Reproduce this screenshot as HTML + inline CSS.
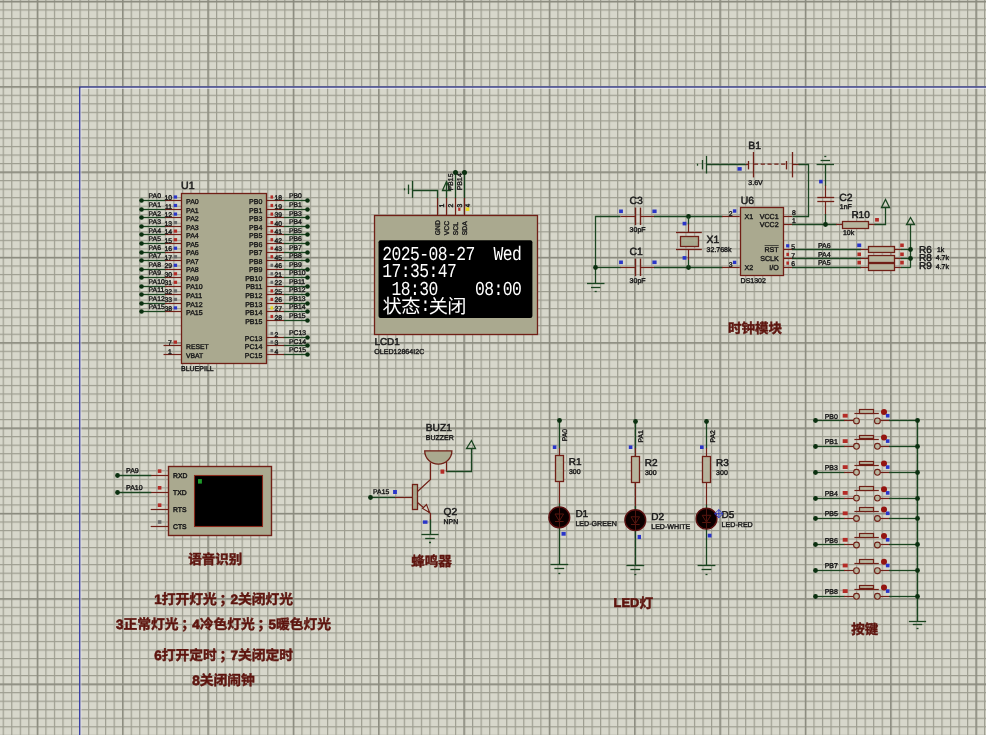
<!DOCTYPE html>
<html><head><meta charset="utf-8"><title>Schematic</title>
<style>
html,body{margin:0;padding:0;background:#d7d7cb;}
body{width:986px;height:735px;overflow:hidden;font-family:"Liberation Sans",sans-serif;}
svg{display:block;will-change:transform;text-rendering:geometricPrecision;font-family:"Liberation Sans",sans-serif;}
.oled{font-family:"Liberation Mono",monospace;font-size:16.38px;letter-spacing:-0.56px;fill:#fff;}
.oledcjk{font-family:"Liberation Sans","Noto Sans CJK SC",sans-serif;font-size:19.2px;fill:#fff;}
.lbl{font-family:"Liberation Sans","Noto Sans CJK SC",sans-serif;font-weight:bold;fill:#5e150f;stroke:#5e150f;stroke-width:0.45;}
</style></head><body>
<svg width="986" height="735" viewBox="0 0 986 735" fill="none">
<defs>
<pattern id="gm" x="2.664" y="0.860" width="8.534" height="8.534" patternUnits="userSpaceOnUse"><path d="M0.5 0V8.534M0 0.5H8.534" stroke="#9d9d90" stroke-width="1.4" fill="none"/></pattern>
<pattern id="gM" x="36.800" y="86.200" width="85.34" height="85.34" patternUnits="userSpaceOnUse"><path d="M0.5 0V85.34M0 0.5H85.34" stroke="#8a8a7e" stroke-width="1.8" fill="none"/></pattern>
</defs>
<rect width="986" height="735" fill="#d7d7cb"/>
<rect width="986" height="735" fill="url(#gm)"/>
<rect width="986" height="735" fill="url(#gM)"/>
<path d="M80.9 735V88.3H986" stroke="#f0f0ff" stroke-opacity="0.75" stroke-width="1"/>
<path d="M79.7 735V87.0H986" stroke="#2830a4" stroke-width="1.15"/>
<path d="M141.4 200.5L165.5 200.5" stroke="#1a4520" stroke-width="1.3"/>
<path d="M165.0 200.5L181.6 200.5" stroke="#701f16" stroke-width="1.2"/>
<circle cx="141.5" cy="200.5" r="2.3" fill="#0b3010"/>
<text x="148.6" y="198.4" font-size="6.8" fill="#1c1c1c" stroke="#1c1c1c" stroke-width="0.4">PA0</text>
<text x="172.0" y="200.0" font-size="6.8" text-anchor="end" fill="#1c1c1c" stroke="#1c1c1c" stroke-width="0.4">10</text>
<rect x="173.7" y="195.4" width="3.4" height="3.2" fill="#2a35c8"/>
<path d="M141.4 209.5L165.5 209.5" stroke="#1a4520" stroke-width="1.3"/>
<path d="M165.0 209.5L181.6 209.5" stroke="#701f16" stroke-width="1.2"/>
<circle cx="141.5" cy="209.5" r="2.3" fill="#0b3010"/>
<text x="148.6" y="206.9" font-size="6.8" fill="#1c1c1c" stroke="#1c1c1c" stroke-width="0.4">PA1</text>
<text x="172.0" y="208.5" font-size="6.8" text-anchor="end" fill="#1c1c1c" stroke="#1c1c1c" stroke-width="0.4">11</text>
<rect x="173.7" y="203.9" width="3.4" height="3.2" fill="#2a35c8"/>
<path d="M141.4 217.5L165.5 217.5" stroke="#1a4520" stroke-width="1.3"/>
<path d="M165.0 217.5L181.6 217.5" stroke="#701f16" stroke-width="1.2"/>
<circle cx="141.5" cy="217.5" r="2.3" fill="#0b3010"/>
<text x="148.6" y="215.5" font-size="6.8" fill="#1c1c1c" stroke="#1c1c1c" stroke-width="0.4">PA2</text>
<text x="172.0" y="217.1" font-size="6.8" text-anchor="end" fill="#1c1c1c" stroke="#1c1c1c" stroke-width="0.4">12</text>
<rect x="173.7" y="212.5" width="3.4" height="3.2" fill="#2a35c8"/>
<path d="M141.4 226.5L165.5 226.5" stroke="#1a4520" stroke-width="1.3"/>
<path d="M165.0 226.5L181.6 226.5" stroke="#701f16" stroke-width="1.2"/>
<circle cx="141.5" cy="226.5" r="2.3" fill="#0b3010"/>
<text x="148.6" y="224.0" font-size="6.8" fill="#1c1c1c" stroke="#1c1c1c" stroke-width="0.4">PA3</text>
<text x="172.0" y="225.6" font-size="6.8" text-anchor="end" fill="#1c1c1c" stroke="#1c1c1c" stroke-width="0.4">13</text>
<rect x="173.7" y="221.0" width="3.4" height="3.2" fill="#6a6a6a"/>
<path d="M141.4 234.5L165.5 234.5" stroke="#1a4520" stroke-width="1.3"/>
<path d="M165.0 234.5L181.6 234.5" stroke="#701f16" stroke-width="1.2"/>
<circle cx="141.5" cy="234.5" r="2.3" fill="#0b3010"/>
<text x="148.6" y="232.5" font-size="6.8" fill="#1c1c1c" stroke="#1c1c1c" stroke-width="0.4">PA4</text>
<text x="172.0" y="234.1" font-size="6.8" text-anchor="end" fill="#1c1c1c" stroke="#1c1c1c" stroke-width="0.4">14</text>
<rect x="173.7" y="229.5" width="3.4" height="3.2" fill="#b42c27"/>
<path d="M141.4 243.5L165.5 243.5" stroke="#1a4520" stroke-width="1.3"/>
<path d="M165.0 243.5L181.6 243.5" stroke="#701f16" stroke-width="1.2"/>
<circle cx="141.5" cy="243.5" r="2.3" fill="#0b3010"/>
<text x="148.6" y="241.1" font-size="6.8" fill="#1c1c1c" stroke="#1c1c1c" stroke-width="0.4">PA5</text>
<text x="172.0" y="242.7" font-size="6.8" text-anchor="end" fill="#1c1c1c" stroke="#1c1c1c" stroke-width="0.4">15</text>
<rect x="173.7" y="238.1" width="3.4" height="3.2" fill="#b42c27"/>
<path d="M141.4 252.5L165.5 252.5" stroke="#1a4520" stroke-width="1.3"/>
<path d="M165.0 252.5L181.6 252.5" stroke="#701f16" stroke-width="1.2"/>
<circle cx="141.5" cy="252.5" r="2.3" fill="#0b3010"/>
<text x="148.6" y="249.6" font-size="6.8" fill="#1c1c1c" stroke="#1c1c1c" stroke-width="0.4">PA6</text>
<text x="172.0" y="251.2" font-size="6.8" text-anchor="end" fill="#1c1c1c" stroke="#1c1c1c" stroke-width="0.4">16</text>
<rect x="173.7" y="246.6" width="3.4" height="3.2" fill="#2a35c8"/>
<path d="M141.4 260.5L165.5 260.5" stroke="#1a4520" stroke-width="1.3"/>
<path d="M165.0 260.5L181.6 260.5" stroke="#701f16" stroke-width="1.2"/>
<circle cx="141.5" cy="260.5" r="2.3" fill="#0b3010"/>
<text x="148.6" y="258.1" font-size="6.8" fill="#1c1c1c" stroke="#1c1c1c" stroke-width="0.4">PA7</text>
<text x="172.0" y="259.7" font-size="6.8" text-anchor="end" fill="#1c1c1c" stroke="#1c1c1c" stroke-width="0.4">17</text>
<rect x="173.7" y="255.1" width="3.4" height="3.2" fill="#6a6a6a"/>
<path d="M141.4 269.5L165.5 269.5" stroke="#1a4520" stroke-width="1.3"/>
<path d="M165.0 269.5L181.6 269.5" stroke="#701f16" stroke-width="1.2"/>
<circle cx="141.5" cy="269.5" r="2.3" fill="#0b3010"/>
<text x="148.6" y="266.7" font-size="6.8" fill="#1c1c1c" stroke="#1c1c1c" stroke-width="0.4">PA8</text>
<text x="172.0" y="268.3" font-size="6.8" text-anchor="end" fill="#1c1c1c" stroke="#1c1c1c" stroke-width="0.4">29</text>
<rect x="173.7" y="263.7" width="3.4" height="3.2" fill="#2a35c8"/>
<path d="M141.4 277.5L165.5 277.5" stroke="#1a4520" stroke-width="1.3"/>
<path d="M165.0 277.5L181.6 277.5" stroke="#701f16" stroke-width="1.2"/>
<circle cx="141.5" cy="277.5" r="2.3" fill="#0b3010"/>
<text x="148.6" y="275.2" font-size="6.8" fill="#1c1c1c" stroke="#1c1c1c" stroke-width="0.4">PA9</text>
<text x="172.0" y="276.8" font-size="6.8" text-anchor="end" fill="#1c1c1c" stroke="#1c1c1c" stroke-width="0.4">30</text>
<rect x="173.7" y="272.2" width="3.4" height="3.2" fill="#b42c27"/>
<path d="M141.4 286.5L165.5 286.5" stroke="#1a4520" stroke-width="1.3"/>
<path d="M165.0 286.5L181.6 286.5" stroke="#701f16" stroke-width="1.2"/>
<circle cx="141.5" cy="286.5" r="2.3" fill="#0b3010"/>
<text x="148.6" y="283.7" font-size="6.8" fill="#1c1c1c" stroke="#1c1c1c" stroke-width="0.4">PA10</text>
<text x="172.0" y="285.3" font-size="6.8" text-anchor="end" fill="#1c1c1c" stroke="#1c1c1c" stroke-width="0.4">31</text>
<rect x="173.7" y="280.7" width="3.4" height="3.2" fill="#b42c27"/>
<path d="M141.4 294.5L165.5 294.5" stroke="#1a4520" stroke-width="1.3"/>
<path d="M165.0 294.5L181.6 294.5" stroke="#701f16" stroke-width="1.2"/>
<circle cx="141.5" cy="294.5" r="2.3" fill="#0b3010"/>
<text x="148.6" y="292.3" font-size="6.8" fill="#1c1c1c" stroke="#1c1c1c" stroke-width="0.4">PA11</text>
<text x="172.0" y="293.9" font-size="6.8" text-anchor="end" fill="#1c1c1c" stroke="#1c1c1c" stroke-width="0.4">32</text>
<rect x="173.7" y="289.3" width="3.4" height="3.2" fill="#6a6a6a"/>
<path d="M141.4 303.5L165.5 303.5" stroke="#1a4520" stroke-width="1.3"/>
<path d="M165.0 303.5L181.6 303.5" stroke="#701f16" stroke-width="1.2"/>
<circle cx="141.5" cy="303.5" r="2.3" fill="#0b3010"/>
<text x="148.6" y="300.8" font-size="6.8" fill="#1c1c1c" stroke="#1c1c1c" stroke-width="0.4">PA12</text>
<text x="172.0" y="302.4" font-size="6.8" text-anchor="end" fill="#1c1c1c" stroke="#1c1c1c" stroke-width="0.4">33</text>
<rect x="173.7" y="297.8" width="3.4" height="3.2" fill="#6a6a6a"/>
<path d="M141.4 311.5L165.5 311.5" stroke="#1a4520" stroke-width="1.3"/>
<path d="M165.0 311.5L181.6 311.5" stroke="#701f16" stroke-width="1.2"/>
<circle cx="141.5" cy="311.5" r="2.3" fill="#0b3010"/>
<text x="148.6" y="309.3" font-size="6.8" fill="#1c1c1c" stroke="#1c1c1c" stroke-width="0.4">PA15</text>
<text x="172.0" y="310.9" font-size="6.8" text-anchor="end" fill="#1c1c1c" stroke="#1c1c1c" stroke-width="0.4">38</text>
<rect x="173.7" y="306.3" width="3.4" height="3.2" fill="#2a35c8"/>
<path d="M283.5 200.5L307.5 200.5" stroke="#1a4520" stroke-width="1.3"/>
<path d="M266.6 200.5L284.0 200.5" stroke="#701f16" stroke-width="1.2"/>
<circle cx="307.5" cy="200.5" r="2.3" fill="#0b3010"/>
<text x="289.0" y="198.4" font-size="6.8" fill="#1c1c1c" stroke="#1c1c1c" stroke-width="0.4">PB0</text>
<text x="274.6" y="200.0" font-size="6.8" fill="#1c1c1c" stroke="#1c1c1c" stroke-width="0.4">18</text>
<rect x="270.5" y="195.4" width="2.6" height="3.2" fill="#b42c27"/>
<path d="M283.5 209.5L307.5 209.5" stroke="#1a4520" stroke-width="1.3"/>
<path d="M266.6 209.5L284.0 209.5" stroke="#701f16" stroke-width="1.2"/>
<circle cx="307.5" cy="209.5" r="2.3" fill="#0b3010"/>
<text x="289.0" y="206.9" font-size="6.8" fill="#1c1c1c" stroke="#1c1c1c" stroke-width="0.4">PB1</text>
<text x="274.6" y="208.5" font-size="6.8" fill="#1c1c1c" stroke="#1c1c1c" stroke-width="0.4">19</text>
<rect x="270.5" y="203.9" width="2.6" height="3.2" fill="#b42c27"/>
<path d="M283.5 217.5L307.5 217.5" stroke="#1a4520" stroke-width="1.3"/>
<path d="M266.6 217.5L284.0 217.5" stroke="#701f16" stroke-width="1.2"/>
<circle cx="307.5" cy="217.5" r="2.3" fill="#0b3010"/>
<text x="289.0" y="215.5" font-size="6.8" fill="#1c1c1c" stroke="#1c1c1c" stroke-width="0.4">PB3</text>
<text x="274.6" y="217.1" font-size="6.8" fill="#1c1c1c" stroke="#1c1c1c" stroke-width="0.4">39</text>
<rect x="270.5" y="212.5" width="2.6" height="3.2" fill="#b42c27"/>
<path d="M283.5 226.5L307.5 226.5" stroke="#1a4520" stroke-width="1.3"/>
<path d="M266.6 226.5L284.0 226.5" stroke="#701f16" stroke-width="1.2"/>
<circle cx="307.5" cy="226.5" r="2.3" fill="#0b3010"/>
<text x="289.0" y="224.0" font-size="6.8" fill="#1c1c1c" stroke="#1c1c1c" stroke-width="0.4">PB4</text>
<text x="274.6" y="225.6" font-size="6.8" fill="#1c1c1c" stroke="#1c1c1c" stroke-width="0.4">40</text>
<rect x="270.5" y="221.0" width="2.6" height="3.2" fill="#b42c27"/>
<path d="M283.5 234.5L307.5 234.5" stroke="#1a4520" stroke-width="1.3"/>
<path d="M266.6 234.5L284.0 234.5" stroke="#701f16" stroke-width="1.2"/>
<circle cx="307.5" cy="234.5" r="2.3" fill="#0b3010"/>
<text x="289.0" y="232.5" font-size="6.8" fill="#1c1c1c" stroke="#1c1c1c" stroke-width="0.4">PB5</text>
<text x="274.6" y="234.1" font-size="6.8" fill="#1c1c1c" stroke="#1c1c1c" stroke-width="0.4">41</text>
<rect x="270.5" y="229.5" width="2.6" height="3.2" fill="#b42c27"/>
<path d="M283.5 243.5L307.5 243.5" stroke="#1a4520" stroke-width="1.3"/>
<path d="M266.6 243.5L284.0 243.5" stroke="#701f16" stroke-width="1.2"/>
<circle cx="307.5" cy="243.5" r="2.3" fill="#0b3010"/>
<text x="289.0" y="241.1" font-size="6.8" fill="#1c1c1c" stroke="#1c1c1c" stroke-width="0.4">PB6</text>
<text x="274.6" y="242.7" font-size="6.8" fill="#1c1c1c" stroke="#1c1c1c" stroke-width="0.4">42</text>
<rect x="270.5" y="238.1" width="2.6" height="3.2" fill="#b42c27"/>
<path d="M283.5 252.5L307.5 252.5" stroke="#1a4520" stroke-width="1.3"/>
<path d="M266.6 252.5L284.0 252.5" stroke="#701f16" stroke-width="1.2"/>
<circle cx="307.5" cy="252.5" r="2.3" fill="#0b3010"/>
<text x="289.0" y="249.6" font-size="6.8" fill="#1c1c1c" stroke="#1c1c1c" stroke-width="0.4">PB7</text>
<text x="274.6" y="251.2" font-size="6.8" fill="#1c1c1c" stroke="#1c1c1c" stroke-width="0.4">43</text>
<rect x="270.5" y="246.6" width="2.6" height="3.2" fill="#b42c27"/>
<path d="M283.5 260.5L307.5 260.5" stroke="#1a4520" stroke-width="1.3"/>
<path d="M266.6 260.5L284.0 260.5" stroke="#701f16" stroke-width="1.2"/>
<circle cx="307.5" cy="260.5" r="2.3" fill="#0b3010"/>
<text x="289.0" y="258.1" font-size="6.8" fill="#1c1c1c" stroke="#1c1c1c" stroke-width="0.4">PB8</text>
<text x="274.6" y="259.7" font-size="6.8" fill="#1c1c1c" stroke="#1c1c1c" stroke-width="0.4">45</text>
<rect x="270.5" y="255.1" width="2.6" height="3.2" fill="#b42c27"/>
<path d="M283.5 269.5L307.5 269.5" stroke="#1a4520" stroke-width="1.3"/>
<path d="M266.6 269.5L284.0 269.5" stroke="#701f16" stroke-width="1.2"/>
<circle cx="307.5" cy="269.5" r="2.3" fill="#0b3010"/>
<text x="289.0" y="266.7" font-size="6.8" fill="#1c1c1c" stroke="#1c1c1c" stroke-width="0.4">PB9</text>
<text x="274.6" y="268.3" font-size="6.8" fill="#1c1c1c" stroke="#1c1c1c" stroke-width="0.4">46</text>
<rect x="270.5" y="263.7" width="2.6" height="3.2" fill="#6a6a6a"/>
<path d="M283.5 277.5L307.5 277.5" stroke="#1a4520" stroke-width="1.3"/>
<path d="M266.6 277.5L284.0 277.5" stroke="#701f16" stroke-width="1.2"/>
<circle cx="307.5" cy="277.5" r="2.3" fill="#0b3010"/>
<text x="289.0" y="275.2" font-size="6.8" fill="#1c1c1c" stroke="#1c1c1c" stroke-width="0.4">PB10</text>
<text x="274.6" y="276.8" font-size="6.8" fill="#1c1c1c" stroke="#1c1c1c" stroke-width="0.4">21</text>
<rect x="270.5" y="272.2" width="2.6" height="3.2" fill="#6a6a6a"/>
<path d="M283.5 286.5L307.5 286.5" stroke="#1a4520" stroke-width="1.3"/>
<path d="M266.6 286.5L284.0 286.5" stroke="#701f16" stroke-width="1.2"/>
<circle cx="307.5" cy="286.5" r="2.3" fill="#0b3010"/>
<text x="289.0" y="283.7" font-size="6.8" fill="#1c1c1c" stroke="#1c1c1c" stroke-width="0.4">PB11</text>
<text x="274.6" y="285.3" font-size="6.8" fill="#1c1c1c" stroke="#1c1c1c" stroke-width="0.4">22</text>
<rect x="270.5" y="280.7" width="2.6" height="3.2" fill="#6a6a6a"/>
<path d="M283.5 294.5L307.5 294.5" stroke="#1a4520" stroke-width="1.3"/>
<path d="M266.6 294.5L284.0 294.5" stroke="#701f16" stroke-width="1.2"/>
<circle cx="307.5" cy="294.5" r="2.3" fill="#0b3010"/>
<text x="289.0" y="292.3" font-size="6.8" fill="#1c1c1c" stroke="#1c1c1c" stroke-width="0.4">PB12</text>
<text x="274.6" y="293.9" font-size="6.8" fill="#1c1c1c" stroke="#1c1c1c" stroke-width="0.4">25</text>
<rect x="270.5" y="289.3" width="2.6" height="3.2" fill="#b42c27"/>
<path d="M283.5 303.5L307.5 303.5" stroke="#1a4520" stroke-width="1.3"/>
<path d="M266.6 303.5L284.0 303.5" stroke="#701f16" stroke-width="1.2"/>
<circle cx="307.5" cy="303.5" r="2.3" fill="#0b3010"/>
<text x="289.0" y="300.8" font-size="6.8" fill="#1c1c1c" stroke="#1c1c1c" stroke-width="0.4">PB13</text>
<text x="274.6" y="302.4" font-size="6.8" fill="#1c1c1c" stroke="#1c1c1c" stroke-width="0.4">26</text>
<rect x="270.5" y="297.8" width="2.6" height="3.2" fill="#b42c27"/>
<path d="M283.5 311.5L307.5 311.5" stroke="#1a4520" stroke-width="1.3"/>
<path d="M266.6 311.5L284.0 311.5" stroke="#701f16" stroke-width="1.2"/>
<circle cx="307.5" cy="311.5" r="2.3" fill="#0b3010"/>
<text x="289.0" y="309.3" font-size="6.8" fill="#1c1c1c" stroke="#1c1c1c" stroke-width="0.4">PB14</text>
<text x="274.6" y="310.9" font-size="6.8" fill="#1c1c1c" stroke="#1c1c1c" stroke-width="0.4">27</text>
<rect x="270.5" y="306.3" width="2.6" height="3.2" fill="#e8d820"/>
<path d="M283.5 320.5L307.5 320.5" stroke="#1a4520" stroke-width="1.3"/>
<path d="M266.6 320.5L284.0 320.5" stroke="#701f16" stroke-width="1.2"/>
<circle cx="307.5" cy="320.5" r="2.3" fill="#0b3010"/>
<text x="289.0" y="317.9" font-size="6.8" fill="#1c1c1c" stroke="#1c1c1c" stroke-width="0.4">PB15</text>
<text x="274.6" y="319.5" font-size="6.8" fill="#1c1c1c" stroke="#1c1c1c" stroke-width="0.4">28</text>
<rect x="270.5" y="314.9" width="2.6" height="3.2" fill="#b42c27"/>
<path d="M283.5 337.5L307.5 337.5" stroke="#1a4520" stroke-width="1.3"/>
<path d="M266.6 337.5L284.0 337.5" stroke="#701f16" stroke-width="1.2"/>
<circle cx="307.5" cy="337.5" r="2.3" fill="#0b3010"/>
<text x="289.0" y="334.9" font-size="6.8" fill="#1c1c1c" stroke="#1c1c1c" stroke-width="0.4">PC13</text>
<text x="274.6" y="336.5" font-size="6.8" fill="#1c1c1c" stroke="#1c1c1c" stroke-width="0.4">2</text>
<rect x="270.5" y="331.9" width="2.6" height="3.2" fill="#6a6a6a"/>
<path d="M283.5 345.5L307.5 345.5" stroke="#1a4520" stroke-width="1.3"/>
<path d="M266.6 345.5L284.0 345.5" stroke="#701f16" stroke-width="1.2"/>
<circle cx="307.5" cy="345.5" r="2.3" fill="#0b3010"/>
<text x="289.0" y="343.5" font-size="6.8" fill="#1c1c1c" stroke="#1c1c1c" stroke-width="0.4">PC14</text>
<text x="274.6" y="345.1" font-size="6.8" fill="#1c1c1c" stroke="#1c1c1c" stroke-width="0.4">3</text>
<rect x="270.5" y="340.5" width="2.6" height="3.2" fill="#6a6a6a"/>
<path d="M283.5 354.5L307.5 354.5" stroke="#1a4520" stroke-width="1.3"/>
<path d="M266.6 354.5L284.0 354.5" stroke="#701f16" stroke-width="1.2"/>
<circle cx="307.5" cy="354.5" r="2.3" fill="#0b3010"/>
<text x="289.0" y="352.0" font-size="6.8" fill="#1c1c1c" stroke="#1c1c1c" stroke-width="0.4">PC15</text>
<text x="274.6" y="353.6" font-size="6.8" fill="#1c1c1c" stroke="#1c1c1c" stroke-width="0.4">4</text>
<rect x="270.5" y="349.0" width="2.6" height="3.2" fill="#6a6a6a"/>
<path d="M163.5 345.5L181.6 345.5" stroke="#701f16" stroke-width="1.2"/>
<text x="171.8" y="345.1" font-size="6.8" text-anchor="end" fill="#1c1c1c" stroke="#1c1c1c" stroke-width="0.4">7</text>
<rect x="173.6" y="340.5" width="3.4" height="3.2" fill="#b42c27"/>
<path d="M163.5 354.5L181.6 354.5" stroke="#701f16" stroke-width="1.2"/>
<text x="171.8" y="353.6" font-size="6.8" text-anchor="end" fill="#1c1c1c" stroke="#1c1c1c" stroke-width="0.4">1</text>
<rect x="181.5" y="193.5" width="85.0" height="170.0" fill="#aaa98f" stroke="#701f16" stroke-width="1.3"/>
<text x="186.0" y="204.1" font-size="7.0" fill="#1c1c1c" stroke="#1c1c1c" stroke-width="0.4">PA0</text>
<text x="186.0" y="212.6" font-size="7.0" fill="#1c1c1c" stroke="#1c1c1c" stroke-width="0.4">PA1</text>
<text x="186.0" y="221.2" font-size="7.0" fill="#1c1c1c" stroke="#1c1c1c" stroke-width="0.4">PA2</text>
<text x="186.0" y="229.7" font-size="7.0" fill="#1c1c1c" stroke="#1c1c1c" stroke-width="0.4">PA3</text>
<text x="186.0" y="238.2" font-size="7.0" fill="#1c1c1c" stroke="#1c1c1c" stroke-width="0.4">PA4</text>
<text x="186.0" y="246.8" font-size="7.0" fill="#1c1c1c" stroke="#1c1c1c" stroke-width="0.4">PA5</text>
<text x="186.0" y="255.3" font-size="7.0" fill="#1c1c1c" stroke="#1c1c1c" stroke-width="0.4">PA6</text>
<text x="186.0" y="263.8" font-size="7.0" fill="#1c1c1c" stroke="#1c1c1c" stroke-width="0.4">PA7</text>
<text x="186.0" y="272.4" font-size="7.0" fill="#1c1c1c" stroke="#1c1c1c" stroke-width="0.4">PA8</text>
<text x="186.0" y="280.9" font-size="7.0" fill="#1c1c1c" stroke="#1c1c1c" stroke-width="0.4">PA9</text>
<text x="186.0" y="289.4" font-size="7.0" fill="#1c1c1c" stroke="#1c1c1c" stroke-width="0.4">PA10</text>
<text x="186.0" y="298.0" font-size="7.0" fill="#1c1c1c" stroke="#1c1c1c" stroke-width="0.4">PA11</text>
<text x="186.0" y="306.5" font-size="7.0" fill="#1c1c1c" stroke="#1c1c1c" stroke-width="0.4">PA12</text>
<text x="186.0" y="315.0" font-size="7.0" fill="#1c1c1c" stroke="#1c1c1c" stroke-width="0.4">PA15</text>
<text x="262.3" y="204.1" font-size="7.0" text-anchor="end" fill="#1c1c1c" stroke="#1c1c1c" stroke-width="0.4">PB0</text>
<text x="262.3" y="212.6" font-size="7.0" text-anchor="end" fill="#1c1c1c" stroke="#1c1c1c" stroke-width="0.4">PB1</text>
<text x="262.3" y="221.2" font-size="7.0" text-anchor="end" fill="#1c1c1c" stroke="#1c1c1c" stroke-width="0.4">PB3</text>
<text x="262.3" y="229.7" font-size="7.0" text-anchor="end" fill="#1c1c1c" stroke="#1c1c1c" stroke-width="0.4">PB4</text>
<text x="262.3" y="238.2" font-size="7.0" text-anchor="end" fill="#1c1c1c" stroke="#1c1c1c" stroke-width="0.4">PB5</text>
<text x="262.3" y="246.8" font-size="7.0" text-anchor="end" fill="#1c1c1c" stroke="#1c1c1c" stroke-width="0.4">PB6</text>
<text x="262.3" y="255.3" font-size="7.0" text-anchor="end" fill="#1c1c1c" stroke="#1c1c1c" stroke-width="0.4">PB7</text>
<text x="262.3" y="263.8" font-size="7.0" text-anchor="end" fill="#1c1c1c" stroke="#1c1c1c" stroke-width="0.4">PB8</text>
<text x="262.3" y="272.4" font-size="7.0" text-anchor="end" fill="#1c1c1c" stroke="#1c1c1c" stroke-width="0.4">PB9</text>
<text x="262.3" y="280.9" font-size="7.0" text-anchor="end" fill="#1c1c1c" stroke="#1c1c1c" stroke-width="0.4">PB10</text>
<text x="262.3" y="289.4" font-size="7.0" text-anchor="end" fill="#1c1c1c" stroke="#1c1c1c" stroke-width="0.4">PB11</text>
<text x="262.3" y="298.0" font-size="7.0" text-anchor="end" fill="#1c1c1c" stroke="#1c1c1c" stroke-width="0.4">PB12</text>
<text x="262.3" y="306.5" font-size="7.0" text-anchor="end" fill="#1c1c1c" stroke="#1c1c1c" stroke-width="0.4">PB13</text>
<text x="262.3" y="315.0" font-size="7.0" text-anchor="end" fill="#1c1c1c" stroke="#1c1c1c" stroke-width="0.4">PB14</text>
<text x="262.3" y="323.6" font-size="7.0" text-anchor="end" fill="#1c1c1c" stroke="#1c1c1c" stroke-width="0.4">PB15</text>
<text x="262.3" y="340.6" font-size="7.0" text-anchor="end" fill="#1c1c1c" stroke="#1c1c1c" stroke-width="0.4">PC13</text>
<text x="262.3" y="349.2" font-size="7.0" text-anchor="end" fill="#1c1c1c" stroke="#1c1c1c" stroke-width="0.4">PC14</text>
<text x="262.3" y="357.7" font-size="7.0" text-anchor="end" fill="#1c1c1c" stroke="#1c1c1c" stroke-width="0.4">PC15</text>
<text x="186.0" y="349.2" font-size="6.8" fill="#1c1c1c" stroke="#1c1c1c" stroke-width="0.4">RESET</text>
<text x="186.0" y="357.7" font-size="6.8" fill="#1c1c1c" stroke="#1c1c1c" stroke-width="0.4">VBAT</text>
<text x="181.0" y="189.2" font-size="10.6" fill="#1c1c1c" stroke="#1c1c1c" stroke-width="0.5">U1</text>
<text x="181.0" y="371.2" font-size="7" fill="#1c1c1c" stroke="#1c1c1c" stroke-width="0.4">BLUEPILL</text>
<path d="M437.5 198.5L437.5 190.5L412.5 190.5" stroke="#1a4520" stroke-width="1.3" fill="none"/>
<path d="M412.5 180.8L412.5 197.8" stroke="#1a4520" stroke-width="1.3"/>
<path d="M408.5 184.6L408.5 194.1" stroke="#1a4520" stroke-width="1.3"/>
<path d="M404.5 188.3L404.5 190.3" stroke="#1a4520" stroke-width="1.3"/>
<path d="M446.5 198.5L446.5 181.5" stroke="#1a4520" stroke-width="1.3"/>
<path d="M442.5 190.5L446.5 181.5L450.5 190.5Z" stroke="#1a4520" stroke-width="1.3" fill="none"/>
<path d="M455.5 198.5L455.5 172.1" stroke="#1a4520" stroke-width="1.3"/>
<circle cx="455.5" cy="172.5" r="2.5" fill="#0b3010"/>
<path d="M464.5 198.5L464.5 172.1" stroke="#1a4520" stroke-width="1.3"/>
<circle cx="464.5" cy="172.5" r="2.5" fill="#0b3010"/>
<path d="M437.5 198.0L437.5 215.4" stroke="#701f16" stroke-width="1.2"/>
<path d="M446.5 198.0L446.5 215.4" stroke="#701f16" stroke-width="1.2"/>
<path d="M455.5 198.0L455.5 215.4" stroke="#701f16" stroke-width="1.2"/>
<path d="M464.5 198.0L464.5 215.4" stroke="#701f16" stroke-width="1.2"/>
<text x="452.8" y="190.6" font-size="7.0" fill="#1c1c1c" transform="rotate(-90 452.8 190.6)" stroke="#1c1c1c" stroke-width="0.4">PB15</text>
<text x="461.8" y="190.3" font-size="7.0" fill="#1c1c1c" transform="rotate(-90 461.8 190.3)" stroke="#1c1c1c" stroke-width="0.4">PB14</text>
<text x="443.9" y="207.4" font-size="6.8" fill="#1c1c1c" transform="rotate(-90 443.9 207.4)" stroke="#1c1c1c" stroke-width="0.4">1</text>
<text x="452.8" y="207.4" font-size="6.8" fill="#1c1c1c" transform="rotate(-90 452.8 207.4)" stroke="#1c1c1c" stroke-width="0.4">2</text>
<text x="461.7" y="207.4" font-size="6.8" fill="#1c1c1c" transform="rotate(-90 461.7 207.4)" stroke="#1c1c1c" stroke-width="0.4">3</text>
<text x="470.5" y="207.4" font-size="6.8" fill="#1c1c1c" transform="rotate(-90 470.5 207.4)" stroke="#1c1c1c" stroke-width="0.4">4</text>
<rect x="458.2" y="207.7" width="2.2" height="3.2" fill="#b42c27"/>
<rect x="465.7" y="207.4" width="3.6" height="3.6" fill="#e8d820"/>
<rect x="374.5" y="215.5" width="163.0" height="119.0" fill="#aaa98f" stroke="#701f16" stroke-width="1.3"/>
<text x="440.5" y="235.3" font-size="6.8" fill="#1c1c1c" transform="rotate(-90 440.5 235.3)" stroke="#1c1c1c" stroke-width="0.4">GND</text>
<text x="449.4" y="235.3" font-size="6.8" fill="#1c1c1c" transform="rotate(-90 449.4 235.3)" stroke="#1c1c1c" stroke-width="0.4">VCC</text>
<text x="458.3" y="235.3" font-size="6.8" fill="#1c1c1c" transform="rotate(-90 458.3 235.3)" stroke="#1c1c1c" stroke-width="0.4">SCL</text>
<text x="467.1" y="235.3" font-size="6.8" fill="#1c1c1c" transform="rotate(-90 467.1 235.3)" stroke="#1c1c1c" stroke-width="0.4">SDA</text>
<rect x="378.5" y="240.2" width="153.9" height="77.8" fill="#000" rx="2"/>
<text class="oled" transform="translate(382.20 260.2) scale(1 1.209)">2025-08-27</text>
<text class="oled" transform="translate(493.44 260.2) scale(1 1.209)">Wed</text>
<text class="oled" transform="translate(382.20 277.2) scale(1 1.209)">17:35:47</text>
<text class="oled" transform="translate(391.47 294.9) scale(1 1.209)">18:30</text>
<text class="oled" transform="translate(474.90 294.9) scale(1 1.209)">08:00</text>
<text class="oledcjk" x="382.5" y="312.8" letter-spacing="-0.5">状态</text>
<text class="oled" transform="translate(420.60 311.2) scale(1 1.209)">:</text>
<text class="oledcjk" x="428.8" y="312.8" letter-spacing="-0.8">关闭</text>
<text x="374.4" y="344.6" font-size="9.9" fill="#1c1c1c" stroke="#1c1c1c" stroke-width="0.5">LCD1</text>
<text x="374.2" y="354.3" font-size="7.1" fill="#1c1c1c" stroke="#1c1c1c" stroke-width="0.4">OLED12864I2C</text>
<path d="M620.5 216.5L595.5 216.5L595.5 283.5" stroke="#1a4520" stroke-width="1.3" fill="none"/>
<path d="M595.7 267.5L621.0 267.5" stroke="#1a4520" stroke-width="1.3"/>
<circle cx="595.5" cy="267.5" r="2.4" fill="#0b3010"/>
<path d="M587.0 283.5L604.5 283.5" stroke="#1a4520" stroke-width="1.3"/>
<path d="M591.0 287.5L600.5 287.5" stroke="#1a4520" stroke-width="1.3"/>
<path d="M594.7 291.5L596.7 291.5" stroke="#1a4520" stroke-width="1.3"/>
<path d="M620.5 216.5L635.5 216.5" stroke="#701f16" stroke-width="1.2"/>
<path d="M640.6 216.5L654.5 216.5" stroke="#701f16" stroke-width="1.2"/>
<path d="M635.5 207.6L635.5 225.0" stroke="#701f16" stroke-width="1.4"/>
<path d="M640.5 207.6L640.5 225.0" stroke="#701f16" stroke-width="1.4"/>
<path d="M654.0 216.5L722.5 216.5" stroke="#1a4520" stroke-width="1.3"/>
<path d="M722.0 216.5L739.7 216.5" stroke="#701f16" stroke-width="1.2"/>
<rect x="619.1" y="209.5" width="3.8" height="3.6" fill="#2a35c8"/>
<rect x="652.4" y="209.5" width="4.2" height="3.6" fill="#2a35c8"/>
<text x="629.6" y="204.4" font-size="10.4" fill="#1c1c1c" stroke="#1c1c1c" stroke-width="0.5">C3</text>
<text x="629.6" y="231.6" font-size="7.0" fill="#1c1c1c" stroke="#1c1c1c" stroke-width="0.4">30pF</text>
<circle cx="688.5" cy="216.5" r="2.4" fill="#0b3010"/>
<path d="M620.5 267.5L635.5 267.5" stroke="#701f16" stroke-width="1.2"/>
<path d="M640.6 267.5L654.5 267.5" stroke="#701f16" stroke-width="1.2"/>
<path d="M635.5 258.6L635.5 276.0" stroke="#701f16" stroke-width="1.4"/>
<path d="M640.5 258.6L640.5 276.0" stroke="#701f16" stroke-width="1.4"/>
<path d="M654.0 267.5L722.5 267.5" stroke="#1a4520" stroke-width="1.3"/>
<path d="M722.0 267.5L739.7 267.5" stroke="#701f16" stroke-width="1.2"/>
<rect x="619.1" y="260.5" width="3.8" height="3.6" fill="#2a35c8"/>
<rect x="652.4" y="260.5" width="4.2" height="3.6" fill="#2a35c8"/>
<text x="629.6" y="255.4" font-size="10.4" fill="#1c1c1c" stroke="#1c1c1c" stroke-width="0.5">C1</text>
<text x="629.6" y="282.6" font-size="7.0" fill="#1c1c1c" stroke="#1c1c1c" stroke-width="0.4">30pF</text>
<circle cx="688.5" cy="267.5" r="2.4" fill="#0b3010"/>
<path d="M688.5 216.6L688.5 224.5" stroke="#1a4520" stroke-width="1.3"/>
<path d="M688.5 224.0L688.5 232.9" stroke="#701f16" stroke-width="1.2"/>
<path d="M688.5 259.5L688.5 267.6" stroke="#1a4520" stroke-width="1.3"/>
<path d="M688.5 249.8L688.5 260.0" stroke="#701f16" stroke-width="1.2"/>
<path d="M676.0 232.5L701.8 232.5" stroke="#701f16" stroke-width="1.3"/>
<path d="M676.0 249.5L701.8 249.5" stroke="#701f16" stroke-width="1.3"/>
<rect x="680.5" y="236.5" width="18.0" height="10.0" fill="#aaa98f" stroke="#701f16" stroke-width="1.3"/>
<rect x="682.6" y="221.8" width="3.8" height="3.6" fill="#2a35c8"/>
<rect x="682.6" y="256.1" width="3.8" height="3.6" fill="#2a35c8"/>
<text x="706.6" y="242.9" font-size="10.4" fill="#1c1c1c" stroke="#1c1c1c" stroke-width="0.5">X1</text>
<text x="706.6" y="251.5" font-size="7.0" fill="#1c1c1c" stroke="#1c1c1c" stroke-width="0.4">32.768k</text>
<rect x="732.9" y="209.3" width="3.4" height="3.4" fill="#2a35c8"/>
<rect x="732.9" y="260.7" width="3.4" height="3.4" fill="#2a35c8"/>
<text x="732.5" y="215.6" font-size="6.8" text-anchor="end" fill="#1c1c1c" stroke="#1c1c1c" stroke-width="0.4">2</text>
<text x="732.5" y="266.8" font-size="6.8" text-anchor="end" fill="#1c1c1c" stroke="#1c1c1c" stroke-width="0.4">3</text>
<path d="M783.5 216.5L792.5 216.5" stroke="#701f16" stroke-width="1.2"/>
<path d="M783.5 224.5L792.5 224.5" stroke="#701f16" stroke-width="1.2"/>
<path d="M783.5 249.5L792.5 249.5" stroke="#701f16" stroke-width="1.2"/>
<path d="M783.5 258.5L792.5 258.5" stroke="#701f16" stroke-width="1.2"/>
<path d="M783.5 267.5L792.5 267.5" stroke="#701f16" stroke-width="1.2"/>
<path d="M706.5 155.9L706.5 173.5" stroke="#1a4520" stroke-width="1.3"/>
<path d="M702.5 160.0L702.5 169.4" stroke="#1a4520" stroke-width="1.3"/>
<path d="M697.5 163.7L697.5 165.7" stroke="#1a4520" stroke-width="1.3"/>
<path d="M706.5 164.5L746.5 164.5" stroke="#1a4520" stroke-width="1.3"/>
<path d="M746.0 164.5L749.0 164.5" stroke="#701f16" stroke-width="1.2"/>
<path d="M748.5 161.0L748.5 169.4" stroke="#701f16" stroke-width="1.3"/>
<path d="M753.5 152.0L753.5 177.4" stroke="#701f16" stroke-width="1.3"/>
<path d="M753.9 164.2L786.7 164.2" stroke="#701f16" stroke-width="1.2" stroke-dasharray="4.2 2.6"/>
<path d="M786.5 161.0L786.5 169.4" stroke="#701f16" stroke-width="1.3"/>
<path d="M792.5 152.0L792.5 177.4" stroke="#701f16" stroke-width="1.3"/>
<path d="M792.0 164.5L799.5 164.5" stroke="#701f16" stroke-width="1.2"/>
<path d="M798.5 164.5L808.5 164.5L808.5 216.5L792.5 216.5" stroke="#1a4520" stroke-width="1.3" fill="none"/>
<rect x="737.5" y="167.1" width="4.2" height="3.6" fill="#2a35c8"/>
<text x="748.3" y="149.2" font-size="10.4" fill="#1c1c1c" stroke="#1c1c1c" stroke-width="0.5">B1</text>
<text x="748.3" y="184.9" font-size="7.0" fill="#1c1c1c" stroke="#1c1c1c" stroke-width="0.4">3.6V</text>
<path d="M816.6 164.5L834.0 164.5" stroke="#1a4520" stroke-width="1.3"/>
<path d="M820.6 160.5L830.0 160.5" stroke="#1a4520" stroke-width="1.3"/>
<path d="M824.3 156.5L826.3 156.5" stroke="#1a4520" stroke-width="1.3"/>
<path d="M825.5 164.2L825.5 186.0" stroke="#1a4520" stroke-width="1.3"/>
<path d="M825.5 185.5L825.5 197.1" stroke="#701f16" stroke-width="1.2"/>
<path d="M817.3 197.5L834.2 197.5" stroke="#701f16" stroke-width="1.3"/>
<path d="M817.3 201.5L834.2 201.5" stroke="#701f16" stroke-width="1.3"/>
<path d="M825.5 201.3L825.5 214.5" stroke="#701f16" stroke-width="1.2"/>
<path d="M825.5 214.0L825.5 224.5" stroke="#1a4520" stroke-width="1.3"/>
<rect x="819.1" y="179.8" width="3.6" height="3.6" fill="#2a35c8"/>
<text x="839.2" y="200.6" font-size="10.4" fill="#1c1c1c" stroke="#1c1c1c" stroke-width="0.5">C2</text>
<text x="839.8" y="209.2" font-size="7.0" fill="#1c1c1c" stroke="#1c1c1c" stroke-width="0.4">1nF</text>
<path d="M792.0 224.5L836.6 224.5" stroke="#1a4520" stroke-width="1.3"/>
<circle cx="825.5" cy="224.5" r="2.4" fill="#0b3010"/>
<path d="M836.0 224.5L843.0 224.5" stroke="#701f16" stroke-width="1.2"/>
<rect x="842.5" y="221.5" width="26.0" height="7.0" fill="#b7b59e" stroke="#701f16" stroke-width="1.3"/>
<path d="M868.9 224.5L875.5 224.5" stroke="#701f16" stroke-width="1.2"/>
<path d="M874.5 224.5L885.5 224.5L885.5 207.5" stroke="#1a4520" stroke-width="1.3" fill="none"/>
<path d="M881.5 207.5L885.5 199.5L889.5 207.5Z" stroke="#1a4520" stroke-width="1.3" fill="none"/>
<rect x="875.1" y="218.0" width="3.8" height="3.6" fill="#b42c27"/>
<text x="851.4" y="218.0" font-size="10.0" fill="#1c1c1c" stroke="#1c1c1c" stroke-width="0.5">R10</text>
<text x="842.9" y="234.7" font-size="7.0" fill="#1c1c1c" stroke="#1c1c1c" stroke-width="0.4">10k</text>
<path d="M792.0 249.5L861.0 249.5" stroke="#1a4520" stroke-width="1.3"/>
<path d="M860.5 249.5L868.5 249.5" stroke="#701f16" stroke-width="1.2"/>
<path d="M894.5 249.5L901.5 249.5" stroke="#701f16" stroke-width="1.2"/>
<path d="M901.0 249.5L910.5 249.5" stroke="#1a4520" stroke-width="1.3"/>
<text x="817.9" y="247.9" font-size="7.0" fill="#1c1c1c" stroke="#1c1c1c" stroke-width="0.4">PA6</text>
<text x="791.3" y="249.0" font-size="6.8" fill="#1c1c1c" stroke="#1c1c1c" stroke-width="0.4">5</text>
<rect x="786.1" y="244.2" width="3.2" height="3.2" fill="#2a35c8"/>
<path d="M792.0 258.5L861.0 258.5" stroke="#1a4520" stroke-width="1.3"/>
<path d="M860.5 258.5L868.5 258.5" stroke="#701f16" stroke-width="1.2"/>
<path d="M894.5 258.5L901.5 258.5" stroke="#701f16" stroke-width="1.2"/>
<path d="M901.0 258.5L910.5 258.5" stroke="#1a4520" stroke-width="1.3"/>
<text x="817.9" y="256.5" font-size="7.0" fill="#1c1c1c" stroke="#1c1c1c" stroke-width="0.4">PA4</text>
<text x="791.3" y="257.6" font-size="6.8" fill="#1c1c1c" stroke="#1c1c1c" stroke-width="0.4">7</text>
<rect x="786.4" y="252.8" width="2.6" height="3.2" fill="#b42c27"/>
<path d="M792.0 267.5L861.0 267.5" stroke="#1a4520" stroke-width="1.3"/>
<path d="M860.5 267.5L868.5 267.5" stroke="#701f16" stroke-width="1.2"/>
<path d="M894.5 267.5L901.5 267.5" stroke="#701f16" stroke-width="1.2"/>
<path d="M901.0 267.5L910.5 267.5" stroke="#1a4520" stroke-width="1.3"/>
<text x="817.9" y="265.2" font-size="7.0" fill="#1c1c1c" stroke="#1c1c1c" stroke-width="0.4">PA5</text>
<text x="791.3" y="266.3" font-size="6.8" fill="#1c1c1c" stroke="#1c1c1c" stroke-width="0.4">6</text>
<rect x="786.4" y="261.5" width="2.6" height="3.2" fill="#b42c27"/>
<rect x="868.5" y="246.5" width="26.0" height="6.0" fill="#b7b59e" stroke="#701f16" stroke-width="1.3"/>
<rect x="868.5" y="255.5" width="26.0" height="7.0" fill="#b7b59e" stroke="#701f16" stroke-width="1.3"/>
<rect x="868.5" y="263.5" width="26.0" height="7.0" fill="#b7b59e" stroke="#701f16" stroke-width="1.3"/>
<rect x="857.2" y="243.5" width="4.0" height="3.6" fill="#2a35c8"/>
<rect x="857.4" y="252.5" width="3.6" height="3.6" fill="#b42c27"/>
<rect x="857.4" y="260.7" width="3.6" height="3.8" fill="#b42c27"/>
<rect x="900.2" y="243.5" width="3.6" height="3.6" fill="#b42c27"/>
<rect x="900.2" y="252.5" width="3.6" height="3.6" fill="#b42c27"/>
<rect x="900.2" y="260.7" width="3.6" height="3.8" fill="#b42c27"/>
<path d="M910.5 267.7L910.5 224.4" stroke="#1a4520" stroke-width="1.3"/>
<path d="M906.5 224.5L910.5 217.5L914.5 224.5Z" stroke="#1a4520" stroke-width="1.3" fill="none"/>
<circle cx="910.5" cy="249.5" r="2.4" fill="#0b3010"/>
<circle cx="910.5" cy="258.5" r="2.4" fill="#0b3010"/>
<text x="919.0" y="252.7" font-size="10.0" fill="#1c1c1c" stroke="#1c1c1c" stroke-width="0.5">R6</text>
<text x="919.0" y="260.8" font-size="10.0" fill="#1c1c1c" stroke="#1c1c1c" stroke-width="0.5">R8</text>
<text x="919.0" y="269.0" font-size="10.0" fill="#1c1c1c" stroke="#1c1c1c" stroke-width="0.5">R9</text>
<text x="937.0" y="252.2" font-size="6.9" fill="#1c1c1c" stroke="#1c1c1c" stroke-width="0.4">1k</text>
<text x="935.8" y="260.4" font-size="6.9" fill="#1c1c1c" stroke="#1c1c1c" stroke-width="0.4">4.7k</text>
<text x="935.8" y="268.6" font-size="6.9" fill="#1c1c1c" stroke="#1c1c1c" stroke-width="0.4">4.7k</text>
<rect x="740.5" y="207.5" width="43.0" height="68.0" fill="#aaa98f" stroke="#701f16" stroke-width="1.3"/>
<text x="744.6" y="219.0" font-size="7.1" fill="#1c1c1c" stroke="#1c1c1c" stroke-width="0.4">X1</text>
<text x="744.6" y="269.8" font-size="7.1" fill="#1c1c1c" stroke="#1c1c1c" stroke-width="0.4">X2</text>
<text x="778.7" y="219.0" font-size="7.1" text-anchor="end" fill="#1c1c1c" stroke="#1c1c1c" stroke-width="0.4">VCC1</text>
<text x="778.7" y="226.8" font-size="7.1" text-anchor="end" fill="#1c1c1c" stroke="#1c1c1c" stroke-width="0.4">VCC2</text>
<text x="778.7" y="252.4" font-size="7.1" text-anchor="end" fill="#1c1c1c" stroke="#1c1c1c" stroke-width="0.4">RST</text>
<path d="M764.6 245.5L778.7 245.5" stroke="#1c1c1c" stroke-width="0.7"/>
<text x="778.7" y="260.8" font-size="7.1" text-anchor="end" fill="#1c1c1c" stroke="#1c1c1c" stroke-width="0.4">SCLK</text>
<text x="778.7" y="269.8" font-size="7.1" text-anchor="end" fill="#1c1c1c" stroke="#1c1c1c" stroke-width="0.4">I/O</text>
<text x="792.0" y="215.1" font-size="6.8" fill="#1c1c1c" stroke="#1c1c1c" stroke-width="0.4">8</text>
<text x="792.0" y="223.0" font-size="6.8" fill="#1c1c1c" stroke="#1c1c1c" stroke-width="0.4">1</text>
<text x="740.8" y="203.9" font-size="10.4" fill="#1c1c1c" stroke="#1c1c1c" stroke-width="0.5">U6</text>
<text x="740.6" y="283.1" font-size="7.0" fill="#1c1c1c" stroke="#1c1c1c" stroke-width="0.4">DS1302</text>
<text class="lbl" x="728.0" y="333.4" font-size="13.5">时钟模块</text>
<path d="M150.7 475.5L169.0 475.5" stroke="#701f16" stroke-width="1.2"/>
<rect x="157.8" y="469.3" width="3.6" height="3.6" fill="#b42c27"/>
<path d="M150.7 492.5L169.0 492.5" stroke="#701f16" stroke-width="1.2"/>
<rect x="157.8" y="486.0" width="3.6" height="3.6" fill="#b42c27"/>
<path d="M150.7 509.5L169.0 509.5" stroke="#701f16" stroke-width="1.2"/>
<rect x="157.8" y="503.4" width="3.6" height="3.6" fill="#b42c27"/>
<path d="M150.7 526.5L169.0 526.5" stroke="#701f16" stroke-width="1.2"/>
<rect x="157.8" y="520.2" width="3.6" height="3.6" fill="#6a6a6a"/>
<path d="M117.2 475.5L151.2 475.5" stroke="#1a4520" stroke-width="1.3"/>
<circle cx="117.5" cy="475.5" r="2.4" fill="#0b3010"/>
<text x="126.0" y="472.9" font-size="7.0" fill="#1c1c1c" stroke="#1c1c1c" stroke-width="0.4">PA9</text>
<path d="M117.2 492.5L151.2 492.5" stroke="#1a4520" stroke-width="1.3"/>
<circle cx="117.5" cy="492.5" r="2.4" fill="#0b3010"/>
<text x="126.0" y="489.6" font-size="7.0" fill="#1c1c1c" stroke="#1c1c1c" stroke-width="0.4">PA10</text>
<rect x="168.5" y="466.5" width="103.0" height="69.0" fill="#aaa98f" stroke="#701f16" stroke-width="1.4"/>
<rect x="194.5" y="475.5" width="68.0" height="51.0" fill="#000" stroke="#8a2a1c" stroke-width="1.1"/>
<rect x="198.0" y="479.1" width="3.9" height="4.5" fill="#1f9a2a"/>
<text x="173.0" y="478.2" font-size="6.8" fill="#1c1c1c" stroke="#1c1c1c" stroke-width="0.45">RXD</text>
<text x="173.0" y="494.9" font-size="6.8" fill="#1c1c1c" stroke="#1c1c1c" stroke-width="0.45">TXD</text>
<text x="173.0" y="512.3" font-size="6.8" fill="#1c1c1c" stroke="#1c1c1c" stroke-width="0.45">RTS</text>
<text x="173.0" y="529.1" font-size="6.8" fill="#1c1c1c" stroke="#1c1c1c" stroke-width="0.45">CTS</text>
<text class="lbl" x="188.2" y="564.0" font-size="13.5">语音识别</text>
<text x="154.2" y="604.0" font-size="13.5" font-weight="bold" fill="#5e150f" stroke="#5e150f" stroke-width="0.65">1</text>
<text class="lbl" x="161.72" y="604.0" font-size="13.75">打开灯光</text>
<text class="lbl" x="219.47" y="604.0" font-size="13.75">；</text>
<text x="230.5" y="604.0" font-size="13.5" font-weight="bold" fill="#5e150f" stroke="#5e150f" stroke-width="0.65">2</text>
<text class="lbl" x="237.98" y="604.0" font-size="13.75">关闭灯光</text>
<text x="116.1" y="629.4" font-size="13.5" font-weight="bold" fill="#5e150f" stroke="#5e150f" stroke-width="0.65">3</text>
<text class="lbl" x="123.6" y="629.4" font-size="13.75">正常灯光</text>
<text class="lbl" x="181.35" y="629.4" font-size="13.75">；</text>
<text x="192.3" y="629.4" font-size="13.5" font-weight="bold" fill="#5e150f" stroke="#5e150f" stroke-width="0.65">4</text>
<text class="lbl" x="199.85" y="629.4" font-size="13.75">冷色灯光</text>
<text class="lbl" x="257.6" y="629.4" font-size="13.75">；</text>
<text x="268.6" y="629.4" font-size="13.5" font-weight="bold" fill="#5e150f" stroke="#5e150f" stroke-width="0.65">5</text>
<text class="lbl" x="276.11" y="629.4" font-size="13.75">暖色灯光</text>
<text x="154.2" y="659.9" font-size="13.5" font-weight="bold" fill="#5e150f" stroke="#5e150f" stroke-width="0.65">6</text>
<text class="lbl" x="161.72" y="659.9" font-size="13.75">打开定时</text>
<text class="lbl" x="219.47" y="659.9" font-size="13.75">；</text>
<text x="230.5" y="659.9" font-size="13.5" font-weight="bold" fill="#5e150f" stroke="#5e150f" stroke-width="0.65">7</text>
<text class="lbl" x="237.98" y="659.9" font-size="13.75">关闭定时</text>
<text x="192.3" y="685.2" font-size="13.5" font-weight="bold" fill="#5e150f" stroke="#5e150f" stroke-width="0.65">8</text>
<text class="lbl" x="199.85" y="685.2" font-size="13.75">关闭闹钟</text>
<path d="M370.3 497.5L395.5 497.5" stroke="#1a4520" stroke-width="1.3"/>
<circle cx="370.5" cy="497.5" r="2.4" fill="#0b3010"/>
<path d="M395.0 497.5L412.3 497.5" stroke="#701f16" stroke-width="1.2"/>
<text x="373.1" y="493.8" font-size="6.8" fill="#1c1c1c" stroke="#1c1c1c" stroke-width="0.4">PA15</text>
<rect x="393.1" y="490.0" width="3.8" height="4.0" fill="#2a35c8"/>
<path d="M417.5 491.5L430.5 479.5L430.5 462.5" stroke="#701f16" stroke-width="1.2" fill="none"/>
<path d="M417.5 502.5L430.5 513.5L430.5 520.5" stroke="#701f16" stroke-width="1.2" fill="none"/>
<path d="M422.5 508.5L426.5 504.5L429.5 512.5Z" stroke="#701f16" stroke-width="1.1" fill="#d7d7cb"/>
<path d="M430.5 519.5L430.5 535.0" stroke="#1a4520" stroke-width="1.3"/>
<path d="M421.4 534.5L438.6 534.5" stroke="#1a4520" stroke-width="1.3"/>
<path d="M425.2 538.5L434.8 538.5" stroke="#1a4520" stroke-width="1.3"/>
<path d="M429.0 542.5L431.0 542.5" stroke="#1a4520" stroke-width="1.3"/>
<rect x="412.5" y="484.5" width="5.0" height="25.0" fill="#aaa98f" stroke="#701f16" stroke-width="1.3"/>
<rect x="422.9" y="520.4" width="4.6" height="3.4" fill="#2a35c8"/>
<path d="M446.5 462.0L446.5 471.8" stroke="#701f16" stroke-width="1.2"/>
<path d="M446.5 471.5L471.5 471.5L471.5 448.5" stroke="#1a4520" stroke-width="1.3" fill="none"/>
<path d="M466.5 448.5L471.5 440.5L475.5 448.5Z" stroke="#1a4520" stroke-width="1.3" fill="none"/>
<path d="M424.7 450.8H451.9A13.6 13.4 0 0 1 424.7 450.8Z" fill="#aaa98f" stroke="#701f16" stroke-width="1.3"/>
<rect x="440.5" y="469.5" width="3.8" height="4.2" fill="#b42c27"/>
<text x="425.8" y="431.4" font-size="10.2" fill="#1c1c1c" stroke="#1c1c1c" stroke-width="0.5">BUZ1</text>
<text x="425.8" y="439.7" font-size="7.0" fill="#1c1c1c" stroke="#1c1c1c" stroke-width="0.4">BUZZER</text>
<text x="443.6" y="515.0" font-size="10.2" fill="#1c1c1c" stroke="#1c1c1c" stroke-width="0.5">Q2</text>
<text x="443.6" y="523.9" font-size="6.9" fill="#1c1c1c" stroke="#1c1c1c" stroke-width="0.4">NPN</text>
<text class="lbl" x="411.15" y="566.4" font-size="13.5">蜂鸣器</text>
<path d="M559.5 420.3L559.5 448.5" stroke="#1a4520" stroke-width="1.3"/>
<circle cx="559.5" cy="420.5" r="2.4" fill="#0b3010"/>
<path d="M559.5 448.0L559.5 455.5" stroke="#701f16" stroke-width="1.2"/>
<path d="M559.5 481.3L559.5 503.9" stroke="#701f16" stroke-width="1.2"/>
<path d="M559.5 503.4L559.5 517.4" stroke="#1a4520" stroke-width="1.3"/>
<path d="M559.5 517.4L559.5 564.0" stroke="#1a4520" stroke-width="1.3"/>
<rect x="555.5" y="455.5" width="8.0" height="26.0" fill="#b7b59e" stroke="#701f16" stroke-width="1.3"/>
<path d="M550.4 564.5L568.2 564.5" stroke="#1a4520" stroke-width="1.3"/>
<path d="M554.4 568.5L564.2 568.5" stroke="#1a4520" stroke-width="1.3"/>
<path d="M558.3 573.5L560.3 573.5" stroke="#1a4520" stroke-width="1.3"/>
<circle cx="559.3" cy="517.4" r="10.4" fill="#0a0000" stroke="#5a1010" stroke-width="1.4"/>
<path d="M555.0 514.0L563.6 514.0L559.3 521.0Z" stroke="#58160f" stroke-width="1.0" fill="none"/>
<path d="M555.0 521.5L563.6 521.5" stroke="#58160f" stroke-width="1.0"/>
<path d="M559.5 507.4L559.5 527.4" stroke="#4e140f" stroke-width="1.0"/>
<text x="567.3" y="441.3" font-size="6.8" fill="#1c1c1c" transform="rotate(-90 567.3 441.3)" stroke="#1c1c1c" stroke-width="0.4">PA0</text>
<rect x="552.8" y="445.4" width="3.6" height="3.6" fill="#2a35c8"/>
<text x="568.8" y="464.9" font-size="10.0" fill="#1c1c1c" stroke="#1c1c1c" stroke-width="0.5">R1</text>
<text x="568.9" y="473.5" font-size="7.0" fill="#1c1c1c" stroke="#1c1c1c" stroke-width="0.4">300</text>
<path d="M635.5 421.5L635.5 448.5" stroke="#1a4520" stroke-width="1.3"/>
<circle cx="635.5" cy="421.5" r="2.4" fill="#0b3010"/>
<path d="M635.5 448.0L635.5 456.9" stroke="#701f16" stroke-width="1.2"/>
<path d="M635.5 482.4L635.5 506.7" stroke="#701f16" stroke-width="1.2"/>
<path d="M635.5 506.2L635.5 520.2" stroke="#1a4520" stroke-width="1.3"/>
<path d="M635.5 520.2L635.5 565.2" stroke="#1a4520" stroke-width="1.3"/>
<rect x="631.5" y="456.5" width="8.0" height="26.0" fill="#b7b59e" stroke="#701f16" stroke-width="1.3"/>
<path d="M626.4 565.5L644.2 565.5" stroke="#1a4520" stroke-width="1.3"/>
<path d="M630.4 569.5L640.2 569.5" stroke="#1a4520" stroke-width="1.3"/>
<path d="M634.3 574.5L636.3 574.5" stroke="#1a4520" stroke-width="1.3"/>
<circle cx="635.3" cy="520.2" r="10.4" fill="#0a0000" stroke="#5a1010" stroke-width="1.4"/>
<path d="M631.0 516.8L639.6 516.8L635.3 523.8Z" stroke="#58160f" stroke-width="1.0" fill="none"/>
<path d="M631.0 524.5L639.6 524.5" stroke="#58160f" stroke-width="1.0"/>
<path d="M635.5 510.2L635.5 530.2" stroke="#4e140f" stroke-width="1.0"/>
<text x="643.3" y="442.5" font-size="6.8" fill="#1c1c1c" transform="rotate(-90 643.3 442.5)" stroke="#1c1c1c" stroke-width="0.4">PA1</text>
<rect x="628.8" y="445.4" width="3.6" height="3.6" fill="#2a35c8"/>
<text x="644.8" y="466.3" font-size="10.0" fill="#1c1c1c" stroke="#1c1c1c" stroke-width="0.5">R2</text>
<text x="644.9" y="474.9" font-size="7.0" fill="#1c1c1c" stroke="#1c1c1c" stroke-width="0.4">300</text>
<path d="M706.5 421.5L706.5 448.5" stroke="#1a4520" stroke-width="1.3"/>
<circle cx="706.5" cy="421.5" r="2.4" fill="#0b3010"/>
<path d="M706.5 448.0L706.5 456.9" stroke="#701f16" stroke-width="1.2"/>
<path d="M706.5 482.4L706.5 505.2" stroke="#701f16" stroke-width="1.2"/>
<path d="M706.5 504.7L706.5 518.7" stroke="#1a4520" stroke-width="1.3"/>
<path d="M706.5 518.7L706.5 565.2" stroke="#1a4520" stroke-width="1.3"/>
<rect x="702.5" y="456.5" width="8.0" height="26.0" fill="#b7b59e" stroke="#701f16" stroke-width="1.3"/>
<path d="M697.6 565.5L715.4 565.5" stroke="#1a4520" stroke-width="1.3"/>
<path d="M701.6 569.5L711.4 569.5" stroke="#1a4520" stroke-width="1.3"/>
<path d="M705.5 574.5L707.5 574.5" stroke="#1a4520" stroke-width="1.3"/>
<circle cx="706.5" cy="518.7" r="10.4" fill="#0a0000" stroke="#5a1010" stroke-width="1.4"/>
<path d="M702.2 515.3L710.8 515.3L706.5 522.3Z" stroke="#58160f" stroke-width="1.0" fill="none"/>
<path d="M702.2 522.5L710.8 522.5" stroke="#58160f" stroke-width="1.0"/>
<path d="M706.5 508.7L706.5 528.7" stroke="#4e140f" stroke-width="1.0"/>
<text x="714.5" y="442.5" font-size="6.8" fill="#1c1c1c" transform="rotate(-90 714.5 442.5)" stroke="#1c1c1c" stroke-width="0.4">PA2</text>
<rect x="700.0" y="445.4" width="3.6" height="3.6" fill="#2a35c8"/>
<text x="716.0" y="466.3" font-size="10.0" fill="#1c1c1c" stroke="#1c1c1c" stroke-width="0.5">R3</text>
<text x="716.1" y="474.9" font-size="7.0" fill="#1c1c1c" stroke="#1c1c1c" stroke-width="0.4">300</text>
<text x="575.4" y="517.4" font-size="10.0" fill="#1c1c1c" stroke="#1c1c1c" stroke-width="0.5">D1</text>
<text x="575.4" y="525.8" font-size="7.1" fill="#1c1c1c" stroke="#1c1c1c" stroke-width="0.4">LED-GREEN</text>
<text x="651.2" y="520.4" font-size="10.0" fill="#1c1c1c" stroke="#1c1c1c" stroke-width="0.5">D2</text>
<text x="651.2" y="528.8" font-size="7.1" fill="#1c1c1c" stroke="#1c1c1c" stroke-width="0.4">LED-WHITE</text>
<text x="721.6" y="518.3" font-size="10.0" fill="#1c1c1c" stroke="#1c1c1c" stroke-width="0.5">D5</text>
<text x="721.6" y="526.7" font-size="7.1" fill="#1c1c1c" stroke="#1c1c1c" stroke-width="0.4">LED-RED</text>
<rect x="561.5" y="531.9" width="4.2" height="3.8" fill="#2a35c8"/>
<rect x="637.6" y="534.9" width="3.4" height="4.2" fill="#2a35c8"/>
<rect x="707.7" y="533.7" width="3.8" height="3.8" fill="#2a35c8"/>
<g stroke="#2a35c8" stroke-width="0.9" fill="none"><path d="M714.6 513.7L718.8 509.6L723 513.7L718.8 517.8Z"/><path d="M714.6 513.7H723M718.8 509.6V517.8"/></g>
<text x="613.6" y="607.4" font-size="12.8" font-weight="bold" fill="#5e150f" stroke="#5e150f" stroke-width="0.65">L</text>
<text x="621.4" y="607.4" font-size="12.8" font-weight="bold" fill="#5e150f" stroke="#5e150f" stroke-width="0.65">E</text>
<text x="630.0" y="607.4" font-size="12.8" font-weight="bold" fill="#5e150f" stroke="#5e150f" stroke-width="0.65">D</text>
<text class="lbl" x="639.4" y="607.8" font-size="13.6">灯</text>
<path d="M917.5 420.9L917.5 621.4" stroke="#1a4520" stroke-width="1.4"/>
<path d="M908.9 621.5L926.1 621.5" stroke="#1a4520" stroke-width="1.3"/>
<path d="M912.8 624.5L922.2 624.5" stroke="#1a4520" stroke-width="1.3"/>
<path d="M916.5 628.5L918.5 628.5" stroke="#1a4520" stroke-width="1.3"/>
<path d="M815.6 420.5L844.5 420.5" stroke="#1a4520" stroke-width="1.3"/>
<path d="M844.0 420.5L853.6 420.5" stroke="#701f16" stroke-width="1.2"/>
<path d="M880.3 420.5L889.5 420.5" stroke="#701f16" stroke-width="1.2"/>
<path d="M889.0 420.5L917.5 420.5" stroke="#1a4520" stroke-width="1.3"/>
<circle cx="815.5" cy="420.5" r="2.4" fill="#0b3010"/>
<circle cx="917.5" cy="420.5" r="2.4" fill="#0b3010"/>
<circle cx="856.5" cy="420.9" r="2.9" fill="#b7b59e" stroke="#701f16" stroke-width="1.1"/>
<circle cx="877.4" cy="420.9" r="2.9" fill="#b7b59e" stroke="#701f16" stroke-width="1.1"/>
<path d="M854.4 413.5L878.8 413.5" stroke="#701f16" stroke-width="1.2"/>
<rect x="859.5" y="409.5" width="14.0" height="4.0" fill="#b7b59e" stroke="#701f16" stroke-width="1.2"/>
<circle cx="884.0" cy="412.0" r="3.0" fill="#941410"/>
<rect x="885.9" y="413.9" width="3.6" height="3.6" fill="#2a35c8"/>
<rect x="842.7" y="413.8" width="5.0" height="3.8" fill="#b42c27"/>
<text x="824.7" y="418.5" font-size="7.0" fill="#1c1c1c" stroke="#1c1c1c" stroke-width="0.4">PB0</text>
<path d="M815.6 446.5L844.5 446.5" stroke="#1a4520" stroke-width="1.3"/>
<path d="M844.0 446.5L853.6 446.5" stroke="#701f16" stroke-width="1.2"/>
<path d="M880.3 446.5L889.5 446.5" stroke="#701f16" stroke-width="1.2"/>
<path d="M889.0 446.5L917.5 446.5" stroke="#1a4520" stroke-width="1.3"/>
<circle cx="815.5" cy="446.5" r="2.4" fill="#0b3010"/>
<circle cx="917.5" cy="446.5" r="2.4" fill="#0b3010"/>
<circle cx="856.5" cy="446.3" r="2.9" fill="#b7b59e" stroke="#701f16" stroke-width="1.1"/>
<circle cx="877.4" cy="446.3" r="2.9" fill="#b7b59e" stroke="#701f16" stroke-width="1.1"/>
<path d="M854.4 439.5L878.8 439.5" stroke="#701f16" stroke-width="1.2"/>
<rect x="859.5" y="435.5" width="14.0" height="3.0" fill="#b7b59e" stroke="#701f16" stroke-width="1.2"/>
<circle cx="884.0" cy="437.4" r="3.0" fill="#941410"/>
<rect x="885.9" y="439.3" width="3.6" height="3.6" fill="#2a35c8"/>
<rect x="842.7" y="439.2" width="5.0" height="3.8" fill="#b42c27"/>
<text x="824.7" y="443.9" font-size="7.0" fill="#1c1c1c" stroke="#1c1c1c" stroke-width="0.4">PB1</text>
<path d="M815.6 472.5L844.5 472.5" stroke="#1a4520" stroke-width="1.3"/>
<path d="M844.0 472.5L853.6 472.5" stroke="#701f16" stroke-width="1.2"/>
<path d="M880.3 472.5L889.5 472.5" stroke="#701f16" stroke-width="1.2"/>
<path d="M889.0 472.5L917.5 472.5" stroke="#1a4520" stroke-width="1.3"/>
<circle cx="815.5" cy="472.5" r="2.4" fill="#0b3010"/>
<circle cx="917.5" cy="472.5" r="2.4" fill="#0b3010"/>
<circle cx="856.5" cy="472.3" r="2.9" fill="#b7b59e" stroke="#701f16" stroke-width="1.1"/>
<circle cx="877.4" cy="472.3" r="2.9" fill="#b7b59e" stroke="#701f16" stroke-width="1.1"/>
<path d="M854.4 465.5L878.8 465.5" stroke="#701f16" stroke-width="1.2"/>
<rect x="859.5" y="461.5" width="14.0" height="3.0" fill="#b7b59e" stroke="#701f16" stroke-width="1.2"/>
<circle cx="884.0" cy="463.4" r="3.0" fill="#941410"/>
<rect x="885.9" y="465.3" width="3.6" height="3.6" fill="#2a35c8"/>
<rect x="842.7" y="465.2" width="5.0" height="3.8" fill="#b42c27"/>
<text x="824.7" y="469.9" font-size="7.0" fill="#1c1c1c" stroke="#1c1c1c" stroke-width="0.4">PB3</text>
<path d="M815.6 498.5L844.5 498.5" stroke="#1a4520" stroke-width="1.3"/>
<path d="M844.0 498.5L853.6 498.5" stroke="#701f16" stroke-width="1.2"/>
<path d="M880.3 498.5L889.5 498.5" stroke="#701f16" stroke-width="1.2"/>
<path d="M889.0 498.5L917.5 498.5" stroke="#1a4520" stroke-width="1.3"/>
<circle cx="815.5" cy="498.5" r="2.4" fill="#0b3010"/>
<circle cx="917.5" cy="498.5" r="2.4" fill="#0b3010"/>
<circle cx="856.5" cy="498.1" r="2.9" fill="#b7b59e" stroke="#701f16" stroke-width="1.1"/>
<circle cx="877.4" cy="498.1" r="2.9" fill="#b7b59e" stroke="#701f16" stroke-width="1.1"/>
<path d="M854.4 490.5L878.8 490.5" stroke="#701f16" stroke-width="1.2"/>
<rect x="859.5" y="486.5" width="14.0" height="4.0" fill="#b7b59e" stroke="#701f16" stroke-width="1.2"/>
<circle cx="884.0" cy="489.2" r="3.0" fill="#941410"/>
<rect x="885.9" y="491.1" width="3.6" height="3.6" fill="#2a35c8"/>
<rect x="842.7" y="491.0" width="5.0" height="3.8" fill="#b42c27"/>
<text x="824.7" y="495.7" font-size="7.0" fill="#1c1c1c" stroke="#1c1c1c" stroke-width="0.4">PB4</text>
<path d="M815.6 518.5L844.5 518.5" stroke="#1a4520" stroke-width="1.3"/>
<path d="M844.0 518.5L853.6 518.5" stroke="#701f16" stroke-width="1.2"/>
<path d="M880.3 518.5L889.5 518.5" stroke="#701f16" stroke-width="1.2"/>
<path d="M889.0 518.5L917.5 518.5" stroke="#1a4520" stroke-width="1.3"/>
<circle cx="815.5" cy="518.5" r="2.4" fill="#0b3010"/>
<circle cx="917.5" cy="518.5" r="2.4" fill="#0b3010"/>
<circle cx="856.5" cy="518.5" r="2.9" fill="#b7b59e" stroke="#701f16" stroke-width="1.1"/>
<circle cx="877.4" cy="518.5" r="2.9" fill="#b7b59e" stroke="#701f16" stroke-width="1.1"/>
<path d="M854.4 511.5L878.8 511.5" stroke="#701f16" stroke-width="1.2"/>
<rect x="859.5" y="507.5" width="14.0" height="4.0" fill="#b7b59e" stroke="#701f16" stroke-width="1.2"/>
<circle cx="884.0" cy="509.6" r="3.0" fill="#941410"/>
<rect x="885.9" y="511.5" width="3.6" height="3.6" fill="#2a35c8"/>
<rect x="842.7" y="511.4" width="5.0" height="3.8" fill="#b42c27"/>
<text x="824.7" y="516.1" font-size="7.0" fill="#1c1c1c" stroke="#1c1c1c" stroke-width="0.4">PB5</text>
<path d="M815.6 544.5L844.5 544.5" stroke="#1a4520" stroke-width="1.3"/>
<path d="M844.0 544.5L853.6 544.5" stroke="#701f16" stroke-width="1.2"/>
<path d="M880.3 544.5L889.5 544.5" stroke="#701f16" stroke-width="1.2"/>
<path d="M889.0 544.5L917.5 544.5" stroke="#1a4520" stroke-width="1.3"/>
<circle cx="815.5" cy="544.5" r="2.4" fill="#0b3010"/>
<circle cx="917.5" cy="544.5" r="2.4" fill="#0b3010"/>
<circle cx="856.5" cy="545.0" r="2.9" fill="#b7b59e" stroke="#701f16" stroke-width="1.1"/>
<circle cx="877.4" cy="545.0" r="2.9" fill="#b7b59e" stroke="#701f16" stroke-width="1.1"/>
<path d="M854.4 537.5L878.8 537.5" stroke="#701f16" stroke-width="1.2"/>
<rect x="859.5" y="533.5" width="14.0" height="4.0" fill="#b7b59e" stroke="#701f16" stroke-width="1.2"/>
<circle cx="884.0" cy="536.1" r="3.0" fill="#941410"/>
<rect x="885.9" y="538.0" width="3.6" height="3.6" fill="#2a35c8"/>
<rect x="842.7" y="537.9" width="5.0" height="3.8" fill="#b42c27"/>
<text x="824.7" y="542.6" font-size="7.0" fill="#1c1c1c" stroke="#1c1c1c" stroke-width="0.4">PB6</text>
<path d="M815.6 570.5L844.5 570.5" stroke="#1a4520" stroke-width="1.3"/>
<path d="M844.0 570.5L853.6 570.5" stroke="#701f16" stroke-width="1.2"/>
<path d="M880.3 570.5L889.5 570.5" stroke="#701f16" stroke-width="1.2"/>
<path d="M889.0 570.5L917.5 570.5" stroke="#1a4520" stroke-width="1.3"/>
<circle cx="815.5" cy="570.5" r="2.4" fill="#0b3010"/>
<circle cx="917.5" cy="570.5" r="2.4" fill="#0b3010"/>
<circle cx="856.5" cy="570.7" r="2.9" fill="#b7b59e" stroke="#701f16" stroke-width="1.1"/>
<circle cx="877.4" cy="570.7" r="2.9" fill="#b7b59e" stroke="#701f16" stroke-width="1.1"/>
<path d="M854.4 563.5L878.8 563.5" stroke="#701f16" stroke-width="1.2"/>
<rect x="859.5" y="559.5" width="14.0" height="4.0" fill="#b7b59e" stroke="#701f16" stroke-width="1.2"/>
<circle cx="884.0" cy="561.8" r="3.0" fill="#941410"/>
<rect x="885.9" y="563.7" width="3.6" height="3.6" fill="#2a35c8"/>
<rect x="842.7" y="563.6" width="5.0" height="3.8" fill="#b42c27"/>
<text x="824.7" y="568.3" font-size="7.0" fill="#1c1c1c" stroke="#1c1c1c" stroke-width="0.4">PB7</text>
<path d="M815.6 596.5L844.5 596.5" stroke="#1a4520" stroke-width="1.3"/>
<path d="M844.0 596.5L853.6 596.5" stroke="#701f16" stroke-width="1.2"/>
<path d="M880.3 596.5L889.5 596.5" stroke="#701f16" stroke-width="1.2"/>
<path d="M889.0 596.5L917.5 596.5" stroke="#1a4520" stroke-width="1.3"/>
<circle cx="815.5" cy="596.5" r="2.4" fill="#0b3010"/>
<circle cx="917.5" cy="596.5" r="2.4" fill="#0b3010"/>
<circle cx="856.5" cy="596.3" r="2.9" fill="#b7b59e" stroke="#701f16" stroke-width="1.1"/>
<circle cx="877.4" cy="596.3" r="2.9" fill="#b7b59e" stroke="#701f16" stroke-width="1.1"/>
<path d="M854.4 589.5L878.8 589.5" stroke="#701f16" stroke-width="1.2"/>
<rect x="859.5" y="585.5" width="14.0" height="3.0" fill="#b7b59e" stroke="#701f16" stroke-width="1.2"/>
<circle cx="884.0" cy="587.4" r="3.0" fill="#941410"/>
<rect x="885.9" y="589.3" width="3.6" height="3.6" fill="#2a35c8"/>
<rect x="842.7" y="589.2" width="5.0" height="3.8" fill="#b42c27"/>
<text x="824.7" y="593.9" font-size="7.0" fill="#1c1c1c" stroke="#1c1c1c" stroke-width="0.4">PB8</text>
<text class="lbl" x="851.3" y="633.6" font-size="13.5">按键</text>
</svg>
</body></html>
